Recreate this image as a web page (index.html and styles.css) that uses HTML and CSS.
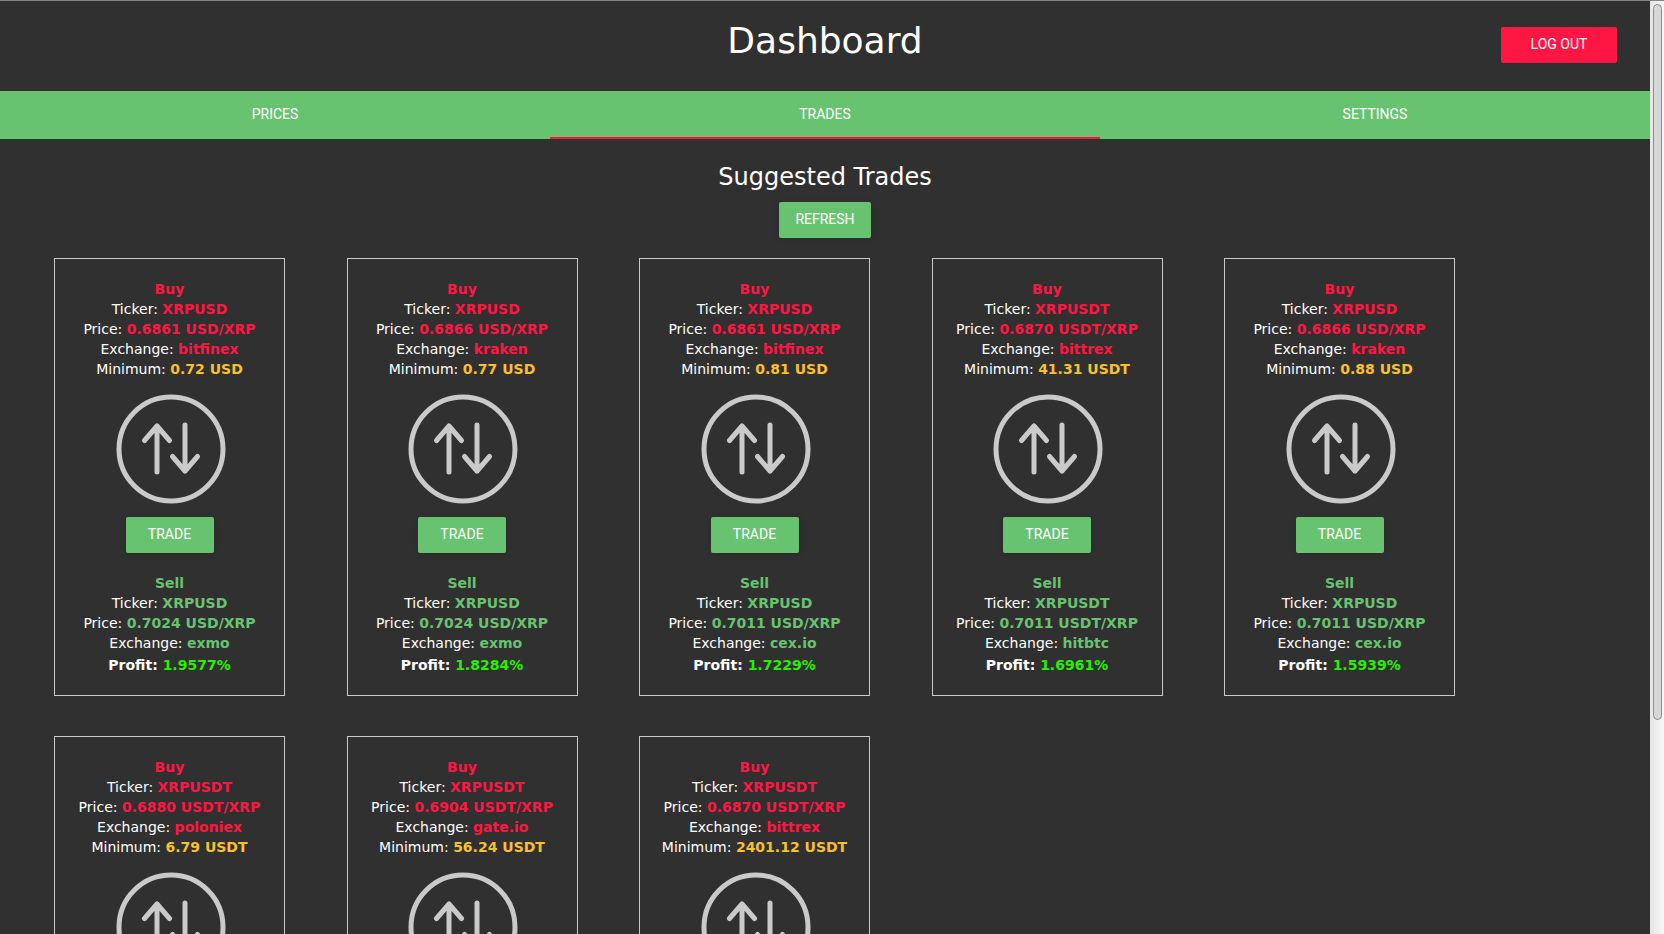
FILE: index.html
```
<!DOCTYPE html>
<html lang="en">
<head>
<meta charset="utf-8">
<title>Dashboard</title>
<link rel="stylesheet" href="styles.css">
</head>
<body>
<svg class="defs" aria-hidden="true">
  <symbol id="swap" viewBox="-2 0 112 110">
    <g fill="none" stroke="#cacaca" stroke-width="5" stroke-linecap="round" stroke-linejoin="round">
      <circle cx="55" cy="55" r="52"/>
      <path d="M41 78V32M28.500 46.500L41 32L53.500 46.500M69 31V77M56.500 62.500L69 77L81.500 62.500"/>
    </g>
  </symbol>
</svg>
<div class="page">
  <header class="topbar">
    <h1 class="title">Dashboard</h1>
    <button class="btn btn-logout" type="button">Log out</button>
  </header>
  <nav class="tabs">
    <a class="tab" href="#prices">Prices</a>
    <a class="tab tab-active" href="#trades" aria-current="page">Trades</a>
    <a class="tab" href="#settings">Settings</a>
  </nav>
  <main class="content">
    <h2 class="subtitle">Suggested Trades</h2>
    <button class="btn btn-refresh" type="button">Refresh</button>
    <div class="cards" id="cards"></div>
  </main>
</div>
<div class="scrollbar" aria-hidden="true"><div class="thumb"></div></div>
<script src="app.js"></script>
</body>
</html>
```
FILE: styles.css
```
* { box-sizing: border-box; }

body {
  margin: 0;
  height: 100vh;
  display: flex;
  overflow: hidden;
  background: #303030;
  color: #fff;
  font: 14px/20px "DejaVu Sans", sans-serif;
  border-top: 1px solid #858585;
}

.defs { display: none; }

.page {
  flex: 1;
  min-width: 0;
  overflow-x: hidden;
  overflow-y: auto;
  scrollbar-width: none;
}

.topbar {
  display: grid;
  grid-template-columns: 1fr auto 1fr;
  align-items: start;
  height: 90px;
  padding: 16px 33px 0;
}

.title {
  grid-column: 2;
  margin: 0;
  font-size: 36px;
  line-height: 48px;
  font-weight: 400;
}

.btn {
  min-width: 88px;
  height: 36px;
  padding: 0 16px 2px;
  border: 0;
  border-radius: 2px;
  background: #68c370;
  color: #fff;
  font: 14px/34px Roboto, sans-serif;
  text-transform: uppercase;
  box-shadow: 0 1px 6px rgba(0, 0, 0, 0.12);
}

.btn-logout {
  justify-self: end;
  width: 116px;
  margin-top: 10px;
  background: #ff1744;
  box-shadow: none;
}

.tabs {
  display: grid;
  grid-template-columns: repeat(3, 1fr);
  background: #68c370;
}

.tab {
  height: 48px;
  border-bottom: 2px solid transparent;
  color: #fff;
  font: 14px/46px Roboto, sans-serif;
  text-align: center;
  text-decoration: none;
  text-transform: uppercase;
}

.tab-active { border-color: #ff1744; }

.content { padding-top: 22px; text-align: center; }

.subtitle {
  margin: 0 0 9px;
  font-size: 24px;
  line-height: 32px;
  font-weight: 400;
}

.btn-refresh { display: block; margin: 0 auto 20px; }

.cards {
  display: grid;
  grid-template-columns: repeat(auto-fill, 231px);
  justify-content: space-between;
  gap: 40px 61px;
  padding: 0 195px 40px 54px;
}

.card { padding: 20px 0; border: 1px solid #cacaca; }
.card p { margin: 0; white-space: nowrap; }

.buy { color: #ff1744; }
.sell { color: #68c370; }
.minimum { color: #fbc02d; }
.gain { color: #2aee00; }

.swap {
  display: block;
  width: 112px;
  height: 110px;
  margin: 15px auto 13px;
}

.btn-trade { display: block; margin: 0 auto 20px; }

.card .profit { margin-top: 2px; font-weight: 700; }

.scrollbar {
  width: 14px;
  padding: 3px 2px 0 3px;
  background: linear-gradient(90deg, #e6e6e6, #f8f8f8);
}

.thumb {
  height: 77%;
  border: 1px solid #8c8c8c;
  border-radius: 5px;
  background: #d8d8d8;
}
```
FILE: app.js
```
const trades = [
  ["XRPUSD", "0.6861 USD/XRP", "bitfinex", "0.72 USD", "0.7024 USD/XRP", "exmo", "1.9577%"],
  ["XRPUSD", "0.6866 USD/XRP", "kraken", "0.77 USD", "0.7024 USD/XRP", "exmo", "1.8284%"],
  ["XRPUSD", "0.6861 USD/XRP", "bitfinex", "0.81 USD", "0.7011 USD/XRP", "cex.io", "1.7229%"],
  ["XRPUSDT", "0.6870 USDT/XRP", "bittrex", "41.31 USDT", "0.7011 USDT/XRP", "hitbtc", "1.6961%"],
  ["XRPUSD", "0.6866 USD/XRP", "kraken", "0.88 USD", "0.7011 USD/XRP", "cex.io", "1.5939%"],
  ["XRPUSDT", "0.6880 USDT/XRP", "poloniex", "6.79 USDT"],
  ["XRPUSDT", "0.6904 USDT/XRP", "gate.io", "56.24 USDT"],
  ["XRPUSDT", "0.6870 USDT/XRP", "bittrex", "2401.12 USDT"]
];

const sellSide = (ticker, price, exchange, profit) => `
    <button class="btn btn-trade" type="button">Trade</button>
    <p><b class="sell">Sell</b></p>
    <p>Ticker: <b class="sell">${ticker}</b></p>
    <p>Price: <b class="sell">${price}</b></p>
    <p>Exchange: <b class="sell">${exchange}</b></p>
    <p class="profit">Profit: <span class="gain">${profit}</span></p>`;

document.getElementById("cards").innerHTML = trades.map(
  ([ticker, buyPrice, buyAt, minimum, sellPrice, sellAt, profit]) => `
  <article class="card">
    <p><b class="buy">Buy</b></p>
    <p>Ticker: <b class="buy">${ticker}</b></p>
    <p>Price: <b class="buy">${buyPrice}</b></p>
    <p>Exchange: <b class="buy">${buyAt}</b></p>
    <p>Minimum: <b class="minimum">${minimum}</b></p>
    <svg class="swap" aria-hidden="true"><use href="#swap"/></svg>
    ${sellPrice ? sellSide(ticker, sellPrice, sellAt, profit) : ""}
  </article>`).join("");
```
